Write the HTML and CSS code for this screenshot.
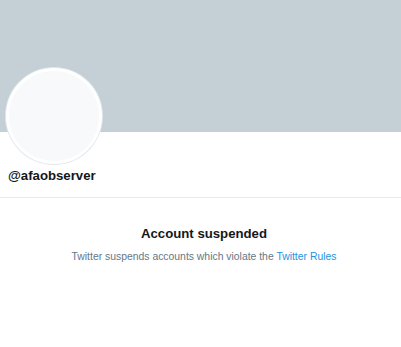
FILE: index.html
```html
<!DOCTYPE html>
<html>
<head>
<meta charset="utf-8">
<link rel="stylesheet" href="styles.css">
</head>
<body>
<div class="banner"></div>
<div class="profile">
  <div class="avatar"></div>
  <div class="handle">@afaobserver</div>
</div>
<div class="divider"></div>
<div class="notice">
  <div class="title">Account suspended</div>
  <div class="desc">Twitter suspends accounts which violate the <a class="link" href="#">Twitter Rules</a></div>
</div>
</body>
</html>
```
FILE: styles.css
```css
html, body {
  margin: 0;
  padding: 0;
  background: #ffffff;
  font-family: "Liberation Sans", Arial, sans-serif;
  color: #14171a;
}
.banner {
  height: 132px;
  background: #c4cfd6;
}
.profile {
  padding: 0 8px;
  display: flex;
  flex-direction: column;
}
.avatar {
  margin-top: -64px;
  margin-left: -2px;
  width: 90px;
  height: 90px;
  border-radius: 50%;
  background: #f7f9fa;
  border: 3px solid #ffffff;
  box-shadow: 0 0 0 1px #e1e8ed;
}
.handle {
  margin-top: 4px;
  font-size: 13.2px;
  font-weight: 700;
  line-height: 16px;
}
.divider {
  margin-top: 13px;
  height: 1px;
  background: #e6ecf0;
}
.notice {
  padding-top: 27px;
  padding-left: 7px;
  text-align: center;
}
.title {
  font-size: 13.2px;
  font-weight: 700;
  line-height: 18px;
}
.desc {
  margin-top: 7px;
  font-size: 10.4px;
  line-height: 14px;
  color: #657786;
}
.link {
  color: #1b95e0;
  text-decoration: none;
}
```
